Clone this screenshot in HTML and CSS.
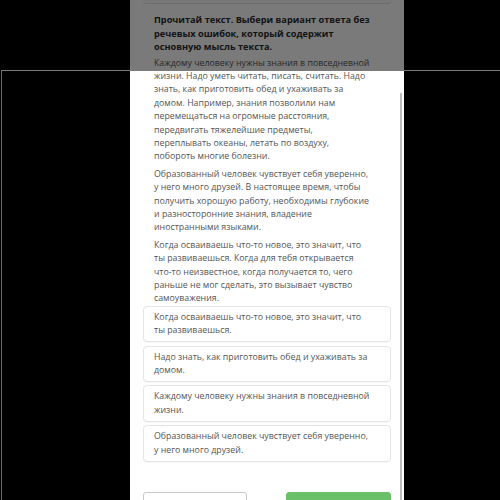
FILE: index.html
```html
<!DOCTYPE html>
<html lang="ru">
<head>
<meta charset="utf-8">
<link rel="stylesheet" href="styles.css">
</head>
<body>
<div class="stage">
  <main class="panel">
    <div class="prev-card"></div>
    <h1 class="title">Прочитай текст. Выбери вариант ответа без<br>речевых ошибок, который содержит<br>основную мысль текста.</h1>
    <p class="para">Каждому человеку нужны знания в повседневной<br>жизни. Надо уметь читать, писать, считать. Надо<br>знать, как приготовить обед и ухаживать за<br>домом. Например, знания позволили нам<br>перемещаться на огромные расстояния,<br>передвигать тяжелейшие предметы,<br>переплывать океаны, летать по воздуху,<br>побороть многие болезни.</p>
    <p class="para">Образованный человек чувствует себя уверенно,<br>у него много друзей. В настоящее время, чтобы<br>получить хорошую работу, необходимы глубокие<br>и разносторонние знания, владение<br>иностранными языками.</p>
    <p class="para">Когда осваиваешь что-то новое, это значит, что<br>ты развиваешься. Когда для тебя открывается<br>что-то неизвестное, когда получается то, чего<br>раньше не мог сделать, это вызывает чувство<br>самоуважения.</p>
    <div class="options">
      <div class="option">Когда осваиваешь что-то новое, это значит, что<br>ты развиваешься.</div>
      <div class="option">Надо знать, как приготовить обед и ухаживать за<br>домом.</div>
      <div class="option">Каждому человеку нужны знания в повседневной<br>жизни.</div>
      <div class="option">Образованный человек чувствует себя уверенно,<br>у него много друзей.</div>
    </div>
    <div class="actions">
      <button class="btn btn-outline" type="button"></button>
      <button class="btn btn-green" type="button"></button>
    </div>
  </main>
  <div class="shade"></div>
  <div class="frame"></div>
  <div class="scrollbar"></div>
</div>
</body>
</html>
```
FILE: styles.css
```css
html, body {
  margin: 0;
  padding: 0;
  background: #000;
  height: 100%;
  overflow: hidden;
}
.stage {
  position: relative;
  width: 500px;
  height: 500px;
  overflow: hidden;
  display: flex;
  box-sizing: border-box;
  padding-left: 130px;
}
.panel {
  width: 274px;
  flex: none;
  background: #fff;
  font-family: "Open Sans", "Noto Sans", sans-serif;
  box-sizing: border-box;
  padding: 0 13px 0 13px;
}
.prev-card {
  height: 3px;
  background: #fafafa;
  border-bottom: 1px solid #e2e2e2;
  border-radius: 0 0 3px 3px;
  margin-bottom: 9px;
}
.title {
  font-size: 9.2px;
  line-height: 13.5px;
  font-weight: 700;
  color: #2b2b2b;
  margin: 0 0 3px;
  padding: 0 4px 0 11px;
  white-space: nowrap;
}
.para {
  font-size: 8.8px;
  line-height: 13.4px;
  color: #555;
  margin: 0 0 4px;
  padding: 0 4px 0 11px;
  white-space: nowrap;
}
.para:last-of-type {
  margin-bottom: 0;
}
.options {
  display: flex;
  flex-direction: column;
  gap: 3.5px;
}
.option {
  border: 1px solid #e4e4e4;
  border-radius: 4px;
  padding: 4px 6px 3.5px 10px;
  font-size: 8.8px;
  line-height: 13.4px;
  color: #555;
  white-space: nowrap;
  box-shadow: 0 1px 1px rgba(0,0,0,0.03);
}
.actions {
  display: flex;
  justify-content: space-between;
  margin-top: 30px;
}
.btn {
  width: 104px;
  height: 30px;
  border-radius: 3px;
  padding: 0;
}
.btn-outline {
  background: #fff;
  border: 1px solid #c9c9c9;
}
.btn-green {
  background: #6abf69;
  border: 1px solid #6abf69;
  width: 105px;
}
.shade {
  position: absolute;
  left: 0;
  top: 0;
  right: 0;
  height: 71px;
  background: rgba(0,0,0,0.52);
}
.frame {
  position: absolute;
  left: 1px;
  top: 70px;
  right: -2px;
  bottom: -2px;
  border-top: 1px solid #7a7a7a;
  border-left: 1px solid #6a6a6a;
  pointer-events: none;
}
.scrollbar {
  position: absolute;
  left: 400px;
  top: 93px;
  width: 2px;
  bottom: 0;
  background: #bdbdbd;
}
```
